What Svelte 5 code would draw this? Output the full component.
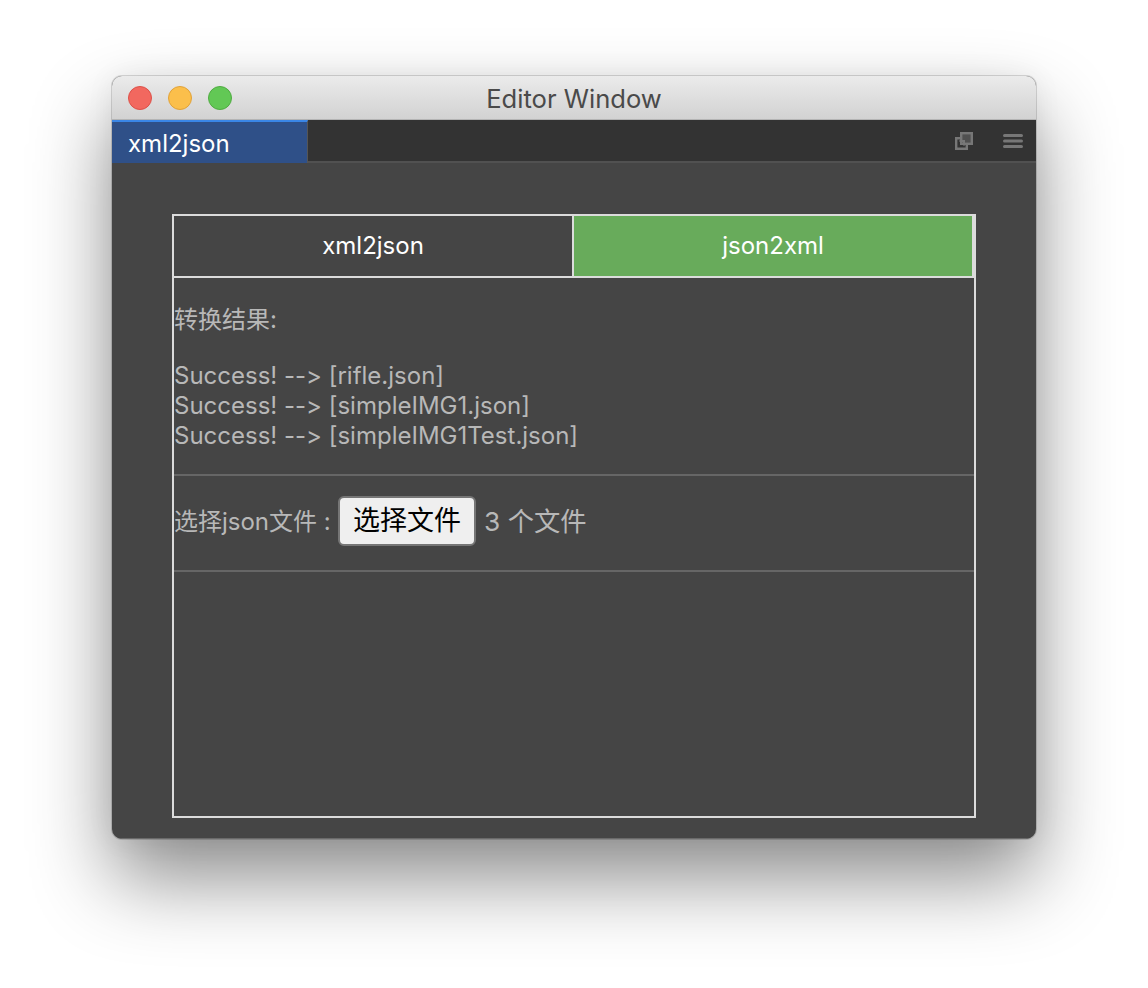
<script>
  const lines = ['Success! --> [rifle.json]', 'Success! --> [simpleIMG1.json]', 'Success! --> [simpleIMG1Test.json]'];
</script>

<div class="page">
  <div class="window">
    <header class="titlebar">
      <div class="lights">
        <span class="light red"></span>
        <span class="light yellow"></span>
        <span class="light green"></span>
      </div>
      <div class="title">Editor Window</div>
    </header>
    <nav class="tabbar">
      <div class="tab">xml2json</div>
      <div class="tools">
        <svg width="18" height="18" viewBox="0 0 18 18" fill="none" stroke="#777" stroke-width="2.4">
          <rect x="6.2" y="1.2" width="10.6" height="10.6" fill="#505050" />
          <path d="M6.2 6.2H1.2V16.8H11.8V11.8" />
          <path d="M4.5 9H9V13.5" stroke-width="2" />
        </svg>
        <svg width="20" height="16" viewBox="0 0 20 16" fill="none" stroke="#777" stroke-width="3" stroke-linecap="round">
          <path d="M1.5 2.5H18.5M1.5 8H18.5M1.5 13.5H18.5" />
        </svg>
      </div>
    </nav>
    <main class="body">
      <section class="panel">
        <div class="switch">
          <button class="seg">xml2json</button>
          <button class="seg on">json2xml</button>
        </div>
        <div class="result">
          <p class="heading">转换结果:</p>
          <div class="lines">
            {#each lines as l}<div>{l}</div>{/each}
          </div>
        </div>
        <div class="picker">
          <label for="f">选择json文件 :</label>
          <button id="f" class="file">选择文件</button>
          <span class="count">3 个文件</span>
        </div>
      </section>
    </main>
  </div>
</div>

<style>
  :global(body) { margin: 0; background: #fff; }
  .page {
    padding: 76px 112px 149px;
    font-family: Inter, "Liberation Sans", "Noto Sans CJK SC", sans-serif;
    font-variant-ligatures: none;
    font-feature-settings: "calt" 0, "liga" 0;
  }
  .window {
    width: 924px;
    height: 763px;
    border-radius: 10px;
    overflow: hidden;
    display: flex;
    flex-direction: column;
    background: #454545;
    box-shadow: 0 0 0 1px rgba(0,0,0,.14), 0 40px 80px rgba(0,0,0,.45), 0 0 30px rgba(0,0,0,.06);
  }
  .titlebar {
    height: 44px;
    flex: none;
    box-sizing: border-box;
    background: linear-gradient(#ebebeb, #d2d2d2);
    border-bottom: 1px solid #b4b4b4;
    display: flex;
    align-items: center;
    justify-content: center;
    position: relative;
  }
  .lights {
    position: absolute;
    left: 16px;
    top: 10px;
    display: flex;
    gap: 16px;
  }
  .light {
    width: 24px;
    height: 24px;
    border-radius: 50%;
    box-sizing: border-box;
    border: 1px solid;
  }
  .red { background: #f2685f; border-color: #dc5149; }
  .yellow { background: #fbbf4b; border-color: #e0a23a; }
  .green { background: #62c855; border-color: #50ab42; }
  .title {
    font-size: 25.6px;
    color: #4a4a4a;
    font-weight: 400;
    padding-top: 2px;
  }
  .tabbar {
    height: 43px;
    flex: none;
    box-sizing: border-box;
    background: #333;
    border-bottom: 2px solid #515151;
    display: flex;
    justify-content: space-between;
  }
  .tab {
    width: 196px;
    height: 43px;
    box-sizing: border-box;
    padding: 1px 0 0 16px;
    background: #2f5088;
    border-top: 2px solid #3a86e6;
    border-right: 1px solid #555;
    color: #fff;
    font-size: 24px;
    display: flex;
    align-items: center;
  }
  .tools {
    display: flex;
    align-items: center;
    gap: 30px;
    padding-right: 13px;
  }
  .body {
    flex: 1;
    min-height: 0;
    padding: 51px 60px 21px;
    box-shadow: inset 0 -1px 0 #6a6a6a;
  }
  .panel {
    height: 100%;
    box-sizing: border-box;
    border: 2px solid #dcdcdc;
    width: 804px;
    color: #b8b8b8;
    font-size: 24px;
  }
  .switch {
    display: flex;
    border-bottom: 2px solid #dcdcdc;
  }
  .seg {
    width: 400px;
    height: 60px;
    box-sizing: border-box;
    background: transparent;
    border: 0;
    border-right: 2px solid #dcdcdc;
    color: #fff;
    font: inherit;
    font-variant-ligatures: none;
    padding: 0 0 1px;
  }
  .seg.on { background: #68ab5b; }
  .result {
    height: 198px;
    box-sizing: border-box;
    border-bottom: 2px solid #666;
  }
  .heading {
    margin: 0;
    padding-top: 27px;
    line-height: 30px;
  }
  .lines {
    margin-top: 26px;
    line-height: 30px;
  }
  .picker {
    height: 96px;
    box-sizing: border-box;
    border-bottom: 2px solid #666;
    display: flex;
    align-items: center;
    padding-bottom: 4px;
  }
  label {
    width: 164px;
    flex: none;
    margin-bottom: 4px;
  }
  .file {
    width: 138px;
    height: 50px;
    margin: 0 8px 0 0;
    box-sizing: border-box;
    background: #efefef;
    border: 2px solid #767676;
    border-radius: 6px;
    color: #000;
    font: inherit;
    font-size: 27px;
    padding: 0 0 5px;
  }
  .count {
    font-size: 26.3px;
    margin-bottom: 4px;
  }
</style>
